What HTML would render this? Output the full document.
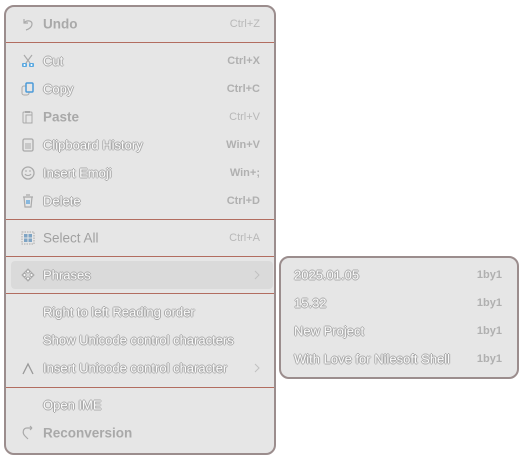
<!DOCTYPE html>
<html><head><meta charset="utf-8"><style>
*{margin:0;padding:0;box-sizing:border-box}
body{width:520px;height:456px;background:#fff;position:relative;font-family:"Liberation Sans",sans-serif;font-size:13px;overflow:hidden}
.menu{position:absolute;background:#e6e6e6;border:2px solid #9b8d8d;border-radius:10px}
.row{position:absolute;left:0;right:0;height:28px}
.t{position:absolute;top:50%;transform:translateY(-50%);white-space:nowrap}
.e{color:#fafafa;text-shadow:1px 0 0 #aaa,-1px 0 0 #aaa,0 1px 0 #aaa,0 -1px 0 #aaa}
.g{color:#a9a9a9;font-weight:bold}
.k{position:absolute;top:50%;transform:translateY(-50%);font-size:11px;white-space:nowrap}
.kg{color:#b8b8b8}
.kb{color:#b0b0b0;font-weight:bold}
.sep{position:absolute;left:0;right:0;height:1px;background:#b26d60}
.ic{position:absolute;top:50%;transform:translateY(-50%);left:14px;width:16px;height:16px}
</style></head><body>
<div class="menu" style="left:4px;top:5px;width:272px;height:450px">
 <div class="row" style="top:3px"><svg class="ic" viewBox="0 0 16 16"><path d="M4 3v4h4M4 7c2-3 8-3 8 1 0 3-3 5-6 6" fill="none" stroke="#aaa" stroke-width="1.2"/></svg><span class="t g" style="left:37px;font-size:13.5px">Undo</span><span class="k kg" style="right:14px">Ctrl+Z</span></div>
 <div class="sep" style="top:35px"></div>
 <div class="row" style="top:40px"><svg class="ic" viewBox="0 0 16 16"><path d="M4 2l6 8M12 2l-6 8" stroke="#aaa" stroke-width="1.2"/><rect x="2" y="10" width="5" height="4" rx="1" fill="#5aa8e0"/><rect x="9" y="10" width="5" height="4" rx="1" fill="#5aa8e0"/><circle cx="4.5" cy="12" r="1" fill="#fff"/><circle cx="11.5" cy="12" r="1" fill="#fff"/></svg><span class="t e" style="left:37px">Cut</span><span class="k kb" style="right:14px">Ctrl+X</span></div>
 <div class="row" style="top:68px"><svg class="ic" viewBox="0 0 16 16"><rect x="2" y="5" width="7" height="9" rx="2" fill="none" stroke="#aaa"/><rect x="6" y="2" width="7" height="9" rx="1" fill="#e6e6e6" stroke="#4a9ad8" stroke-width="1.5"/></svg><span class="t e" style="left:37px">Copy</span><span class="k kb" style="right:14px">Ctrl+C</span></div>
 <div class="row" style="top:96px"><svg class="ic" viewBox="0 0 16 16"><rect x="3" y="3" width="9" height="11" rx="1" fill="none" stroke="#aaa"/><rect x="6" y="6" width="6" height="8" fill="none" stroke="#aaa"/><rect x="5" y="2" width="5" height="2" fill="#aaa"/></svg><span class="t g" style="left:37px;font-size:13.5px">Paste</span><span class="k kg" style="right:14px">Ctrl+V</span></div>
 <div class="row" style="top:124px"><svg class="ic" viewBox="0 0 16 16"><rect x="3" y="2" width="10" height="12" rx="1.5" fill="none" stroke="#aaa" stroke-width="1.3"/><path d="M5 7h6M5 9h6M5 11h6" stroke="#aaa"/></svg><span class="t e" style="left:37px">Clipboard History</span><span class="k kb" style="right:14px">Win+V</span></div>
 <div class="row" style="top:152px"><svg class="ic" viewBox="0 0 16 16"><circle cx="8" cy="8" r="6" fill="none" stroke="#aaa" stroke-width="1.3"/><path d="M5 9c1 2 5 2 6 0M5 6h2M9 6h2" fill="none" stroke="#aaa"/></svg><span class="t e" style="left:37px">Insert Emoji</span><span class="k kb" style="right:14px">Win+;</span></div>
 <div class="row" style="top:180px"><svg class="ic" viewBox="0 0 16 16"><path d="M3 4h10M6 2h4M4 4l1 10h6l1-10" fill="none" stroke="#aaa" stroke-width="1.2"/><path d="M7 7v4M9 7v4" stroke="#4a9ad8" stroke-width="1.2"/></svg><span class="t e" style="left:37px">Delete</span><span class="k kb" style="right:14px">Ctrl+D</span></div>
 <div class="sep" style="top:212px"></div>
 <div class="row" style="top:217px"><svg class="ic" viewBox="0 0 16 16"><rect x="2" y="2" width="12" height="12" fill="none" stroke="#aaa" stroke-dasharray="1.5 1"/><rect x="4" y="4" width="3.5" height="3.5" fill="#7ea4c4"/><rect x="8.5" y="4" width="3.5" height="3.5" fill="#7ea4c4"/><rect x="4" y="8.5" width="3.5" height="3.5" fill="#7ea4c4"/><rect x="8.5" y="8.5" width="3.5" height="3.5" fill="#7ea4c4"/></svg><span class="t g" style="left:37px;font-size:13.5px;font-weight:normal;color:#a0a0a0">Select All</span><span class="k kg" style="right:14px">Ctrl+A</span></div>
 <div class="sep" style="top:249px"></div>
 <div style="position:absolute;left:5px;top:254px;width:262px;height:28px;background:#dadada;border-radius:4px"></div>
 <div class="row" style="top:254px"><svg class="ic" viewBox="0 0 16 16"><path d="M8 2l6 6-6 6-6-6z" fill="none" stroke="#aaa"/><circle cx="8" cy="4.5" r="1.5" fill="#fff" stroke="#aaa"/><circle cx="4.5" cy="8" r="1.5" fill="#fff" stroke="#aaa"/><circle cx="11.5" cy="8" r="1.5" fill="#fff" stroke="#aaa"/><circle cx="8" cy="11.5" r="1.5" fill="#fff" stroke="#aaa"/></svg><span class="t e" style="left:37px">Phrases</span><svg style="position:absolute;right:14px;top:9px" width="6" height="10" viewBox="0 0 6 10"><path d="M1 1l4 4-4 4" fill="none" stroke="#c0c0c0"/></svg></div>
 <div class="sep" style="top:286px"></div>
 <div class="row" style="top:291px"><span class="t e" style="left:37px">Right to left Reading order</span></div>
 <div class="row" style="top:319px"><span class="t e" style="left:37px">Show Unicode control characters</span></div>
 <div class="row" style="top:347px"><svg class="ic" viewBox="0 0 16 16"><path d="M3 14L8 4l5 10" fill="none" stroke="#999" stroke-width="1.3"/></svg><span class="t e" style="left:37px">Insert Unicode control character</span><svg style="position:absolute;right:14px;top:9px" width="6" height="10" viewBox="0 0 6 10"><path d="M1 1l4 4-4 4" fill="none" stroke="#c0c0c0"/></svg></div>
 <div class="sep" style="top:380px"></div>
 <div class="row" style="top:384px"><span class="t e" style="left:37px">Open IME</span></div>
 <div class="row" style="top:412px"><svg class="ic" viewBox="0 0 16 16"><path d="M12 3H7C3 3 2 8 5 11l3 3M12 3l-2-2M12 3l-2 2" fill="none" stroke="#aaa" stroke-width="1.2"/></svg><span class="t g" style="left:37px;font-size:13.5px">Reconversion</span></div>
</div>
<div class="menu" style="left:279px;top:256px;width:240px;height:123px">
 <div class="row" style="top:3px"><span class="t e" style="left:13px">2025.01.05</span><span class="k kb" style="right:15px">1by1</span></div>
 <div class="row" style="top:31px"><span class="t e" style="left:13px">15.32</span><span class="k kb" style="right:15px">1by1</span></div>
 <div class="row" style="top:59px"><span class="t e" style="left:13px">New Project</span><span class="k kb" style="right:15px">1by1</span></div>
 <div class="row" style="top:87px"><span class="t e" style="left:13px">With Love for Nilesoft Shell</span><span class="k kb" style="right:15px">1by1</span></div>
</div>
</body></html>
